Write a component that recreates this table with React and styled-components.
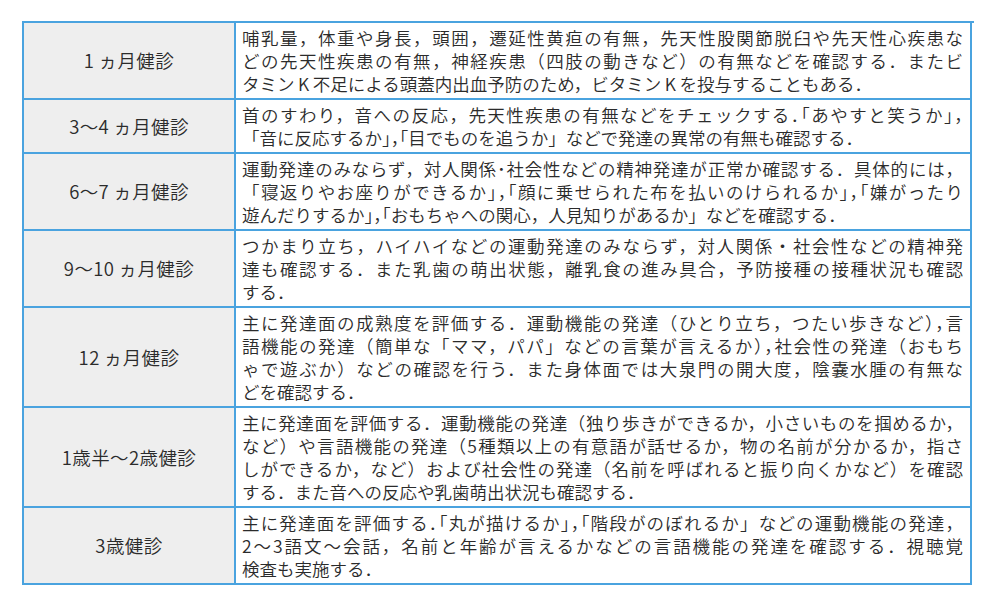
import React from "react";
import styled, { createGlobalStyle } from "styled-components";

const Global = createGlobalStyle`
  html, body { margin: 0; padding: 0; background: #ffffff; }
  body {
    font-family: "Noto Sans CJK JP", "Noto Sans", sans-serif;
    color: #2b2b2b;
  }
`;

const Page = styled.div`
  padding: 21px 0 0 22px;
`;

const Table = styled.div`
  display: grid;
  grid-template-columns: 212px 736px;
  width: 950px;
  border-top: 2px solid #4aa3df;
  border-left: 2px solid #4aa3df;
`;

const LabelCell = styled.div`
  display: flex;
  align-items: center;
  justify-content: center;
  background: #eeeeee;
  border-right: 2px solid #4aa3df;
  border-bottom: 2px solid #4aa3df;
  font-size: 18.5px;
  font-weight: 350;
  letter-spacing: 0.4px;
  line-height: 23px;
`;

const TextCell = styled.div`
  background: #ffffff;
  border-right: 2px solid #4aa3df;
  border-bottom: 2px solid #4aa3df;
  padding: 3px 7px 3px 6px;
  font-size: 17.5px;
  font-weight: 350;
  line-height: 23px;
`;

const Line = styled.span`
  display: block;
  text-align: ${(p) => (p.$last ? "left" : "justify")};
  text-align-last: ${(p) => (p.$last ? "left" : "justify")};
`;

const Punct = styled.span`
  font-feature-settings: "halt";
`;

const PUNCT_RUN = /([「」（），．・]{2,})/;

function renderLine(text) {
  return text.split(PUNCT_RUN).map((part, i) =>
    i % 2 === 1 ? <Punct key={i}>{part}</Punct> : part
  );
}

const rows = [
  {
    label: "1\u2009ヵ月健診",
    lines: [
      "哺乳量，体重や身長，頭囲，遷延性黄疸の有無，先天性股関節脱臼や先天性心疾患な",
      "どの先天性疾患の有無，神経疾患（四肢の動きなど）の有無などを確認する．またビ",
      "タミン\u2009K\u2009不足による頭蓋内出血予防のため，ビタミン\u2009K\u2009を投与することもある．",
    ],
  },
  {
    label: "3～4\u2009ヵ月健診",
    lines: [
      "首のすわり，音への反応，先天性疾患の有無などをチェックする．「あやすと笑うか」，",
      "「音に反応するか」，「目でものを追うか」などで発達の異常の有無も確認する．",
    ],
  },
  {
    label: "6～7\u2009ヵ月健診",
    lines: [
      "運動発達のみならず，対人関係･社会性などの精神発達が正常か確認する．具体的には，",
      "「寝返りやお座りができるか」，「顔に乗せられた布を払いのけられるか」，「嫌がったり",
      "遊んだりするか」，「おもちゃへの関心，人見知りがあるか」などを確認する．",
    ],
  },
  {
    label: "9～10\u2009ヵ月健診",
    lines: [
      "つかまり立ち，ハイハイなどの運動発達のみならず，対人関係・社会性などの精神発",
      "達も確認する．また乳歯の萌出状態，離乳食の進み具合，予防接種の接種状況も確認",
      "する．",
    ],
  },
  {
    label: "12\u2009ヵ月健診",
    lines: [
      "主に発達面の成熟度を評価する．運動機能の発達（ひとり立ち，つたい歩きなど），言",
      "語機能の発達（簡単な「ママ，パパ」などの言葉が言えるか），社会性の発達（おもち",
      "ゃで遊ぶか）などの確認を行う．また身体面では大泉門の開大度，陰嚢水腫の有無な",
      "どを確認する．",
    ],
  },
  {
    label: "1歳半～2歳健診",
    lines: [
      "主に発達面を評価する．運動機能の発達（独り歩きができるか，小さいものを掴めるか，",
      "など）や言語機能の発達（5種類以上の有意語が話せるか，物の名前が分かるか，指さ",
      "しができるか，など）および社会性の発達（名前を呼ばれると振り向くかなど）を確認",
      "する．また音への反応や乳歯萌出状況も確認する．",
    ],
  },
  {
    label: "3歳健診",
    lines: [
      "主に発達面を評価する．「丸が描けるか」，「階段がのぼれるか」などの運動機能の発達，",
      "2～3語文～会話，名前と年齢が言えるかなどの言語機能の発達を確認する．視聴覚",
      "検査も実施する．",
    ],
  },
];

export default function App() {
  return (
    <>
      <Global />
      <Page>
        <Table>
          {rows.map((r) => (
            <React.Fragment key={r.label}>
              <LabelCell>{r.label}</LabelCell>
              <TextCell>
                {r.lines.map((l, i) => (
                  <Line key={i} $last={i === r.lines.length - 1}>
                    {renderLine(l)}
                  </Line>
                ))}
              </TextCell>
            </React.Fragment>
          ))}
        </Table>
      </Page>
    </>
  );
}
